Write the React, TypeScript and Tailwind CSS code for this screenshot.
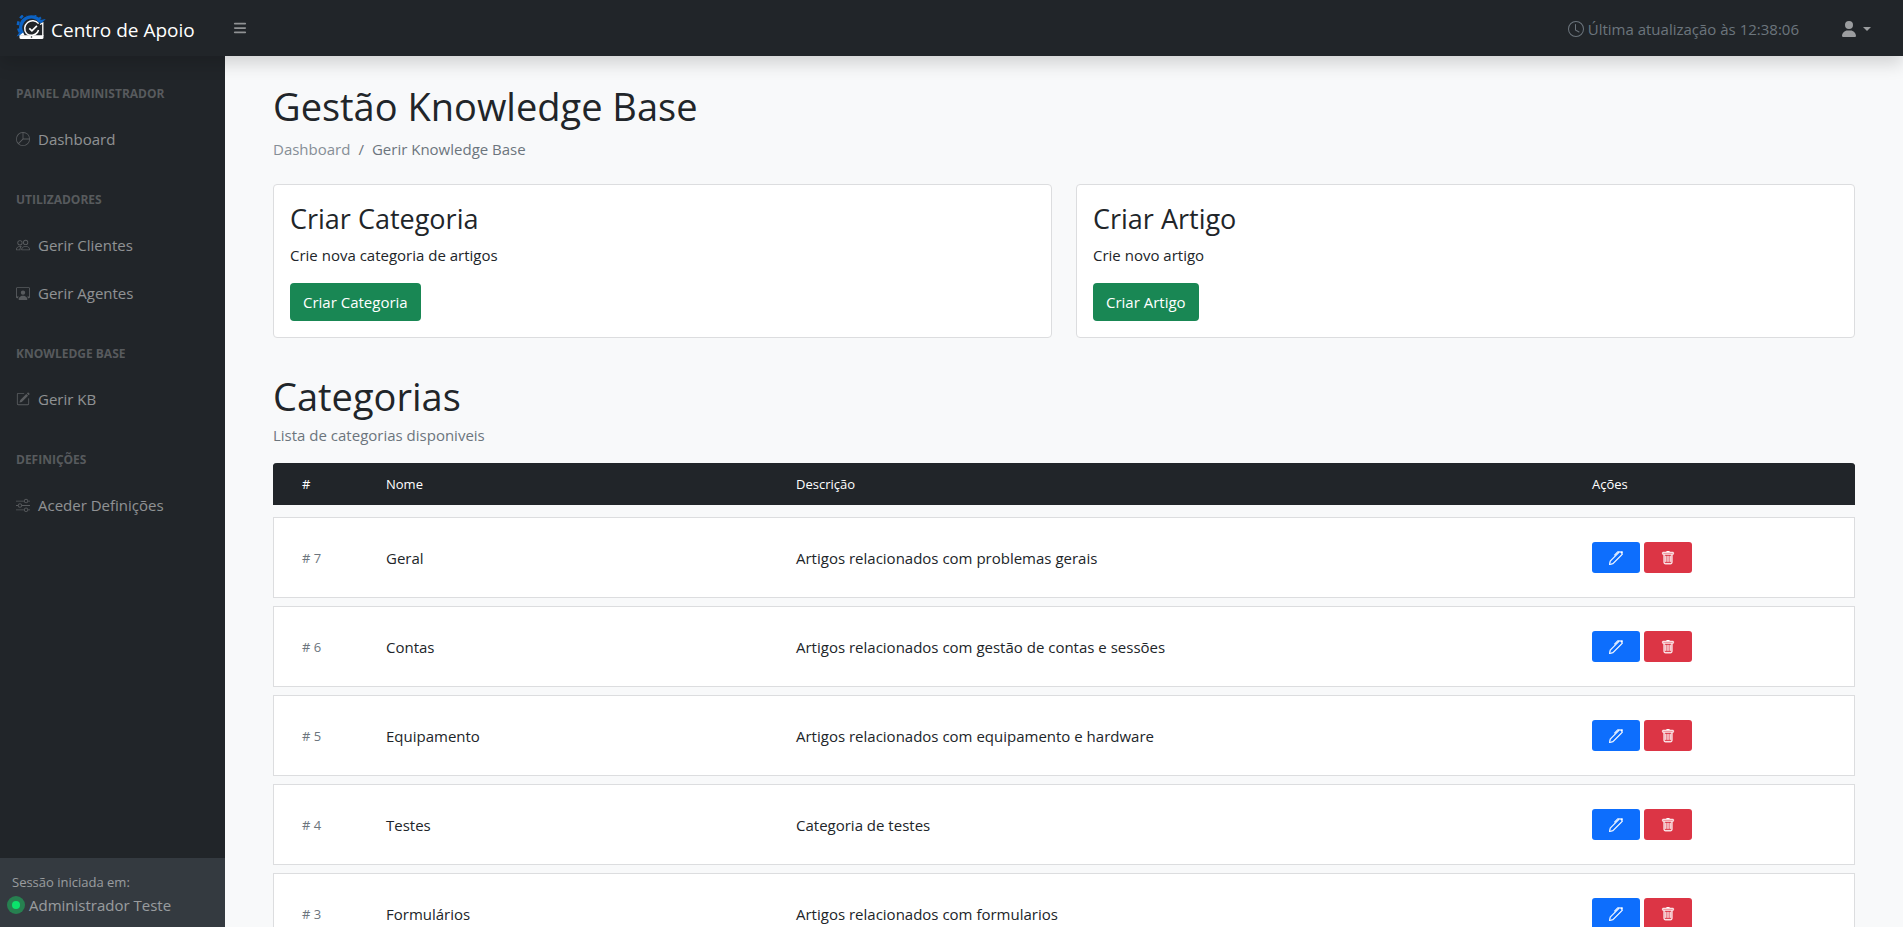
import type { ComponentType } from "react";
import {
  BsClock,
  BsPen,
  BsPencilSquare,
  BsPeople,
  BsPersonWorkspace,
  BsPieChart,
  BsSliders,
  BsTrash,
} from "react-icons/bs";
import { FaBars, FaUser } from "react-icons/fa6";

type NavItem = { label: string; icon: ComponentType<{ className?: string }> };

const sections: { heading: string; items: NavItem[] }[] = [
  { heading: "Painel Administrador", items: [{ label: "Dashboard", icon: BsPieChart }] },
  {
    heading: "Utilizadores",
    items: [
      { label: "Gerir Clientes", icon: BsPeople },
      { label: "Gerir Agentes", icon: BsPersonWorkspace },
    ],
  },
  { heading: "Knowledge Base", items: [{ label: "Gerir KB", icon: BsPencilSquare }] },
  { heading: "Definições", items: [{ label: "Aceder Definições", icon: BsSliders }] },
];

const categories = [
  { id: 7, name: "Geral", description: "Artigos relacionados com problemas gerais" },
  { id: 6, name: "Contas", description: "Artigos relacionados com gestão de contas e sessões" },
  { id: 5, name: "Equipamento", description: "Artigos relacionados com equipamento e hardware" },
  { id: 4, name: "Testes", description: "Categoria de testes" },
  { id: 3, name: "Formulários", description: "Artigos relacionados com formularios" },
];

function Logo() {
  return (
    <svg viewBox="16 15 30 26" className="h-[26px] w-[30px] shrink-0" aria-hidden="true">
      <g fill="none" stroke="#0b62c4">
        <path strokeWidth="3.200" d="M22.400 33.500A10.300 10.300 0 0 1 40.300 21.800" />
        <path strokeWidth="2.600" strokeDasharray="3.800 3.400" d="M19.800 32A12.200 12.200 0 0 1 40.500 19" />
      </g>
      <path fill="#0b62c4" d="M16.500 36.500l4.500-6.500 3 3.500zM37.500 20.500l8.300-1.500-4.600 4.600z" />
      <g fill="none" stroke="#fff">
        <path strokeWidth="1.500" d="M26.500 33.500A7.600 7.600 0 1 1 38.600 23.600M26.500 33.500c3.500 3 10.500 2 12-3.500" />
        <path strokeWidth="1.700" d="m29.300 28.300 2.600 2.500 5-5" />
        <path strokeWidth="1.300" d="M40 24.500l2.800-1.500v13" />
      </g>
      <path fill="#fff" d="M19.500 35.200h24v2.300a1.500 1.500 0 0 1-1.500 1.500H21a1.500 1.500 0 0 1-1.500-1.500z" />
      <path fill="#fff" d="M19.500 35.500l3.600-3 1.600 3z" />
      <circle cx="31.500" cy="37" r=".8" fill="#212529" />
    </svg>
  );
}

function TopBar() {
  return (
    <header className="relative z-10 flex h-14 shrink-0 items-center bg-[#212529] shadow-[0_8px_16px_rgba(0,0,0,0.15)]">
      <a href="#" className="flex w-[225px] items-center gap-[5px] pl-4 text-[19px] text-white">
        <Logo />
        <span className="pt-1">Centro de Apoio</span>
      </a>
      <button type="button" aria-label="Alternar menu" className="px-2 py-1 text-sm text-white/50">
        <FaBars />
      </button>
      <p className="ml-auto flex items-center gap-1 pt-0.5 text-[15px] text-[#6c757d]">
        <BsClock className="size-4" />
        Última atualização às 12:38:06
      </p>
      <button
        type="button"
        aria-label="Conta"
        className="mr-8 ml-[42px] flex items-center gap-1.5 pt-0.5 text-base text-white/55"
      >
        <FaUser />
        <span className="border-x-4 border-t-4 border-x-transparent border-t-current" />
      </button>
    </header>
  );
}

function Sidebar() {
  return (
    <aside className="flex w-[225px] shrink-0 flex-col bg-[#212529]">
      <nav className="flex-1 pt-px">
        {sections.map((section) => (
          <section key={section.heading}>
            <h2 className="px-4 pt-7 pb-3 text-xs leading-[18px] font-bold text-white/25 uppercase">
              {section.heading}
            </h2>
            {section.items.map(({ label, icon: Icon }) => (
              <a
                key={label}
                href="#"
                className="flex h-12 items-center gap-2 px-4 text-[15px] text-white/50"
              >
                <Icon className="size-3.5 text-white/25" />
                {label}
              </a>
            ))}
          </section>
        ))}
      </nav>
      <footer className="h-[69px] bg-[#343a40] px-2 pt-[13px] text-white/50">
        <p className="px-1 text-[13px] leading-[22px]">Sessão iniciada em:</p>
        <p className="flex items-center gap-1 text-[15px] leading-6">
          <span className="-ml-px flex size-[18px] items-center justify-center rounded-full bg-[#278050]">
            <span className="size-2 rounded-full bg-[#0be36b]" />
          </span>
          Administrador Teste
        </p>
      </footer>
    </aside>
  );
}

function ActionCard({ title, text }: { title: string; text: string }) {
  return (
    <article className="rounded border border-[#dcdddf] bg-white p-4">
      <h2 className="mb-1.5 text-[27px] leading-9">{title}</h2>
      <p className="mb-4 text-[15px] leading-6">{text}</p>
      <button
        type="button"
        className="h-[38px] rounded bg-[#198754] px-[13px] text-[15px] text-white"
      >
        {title}
      </button>
    </article>
  );
}

const rowGrid = "grid grid-cols-[84px_410fr_796fr_234fr] items-center px-7 text-left";

function CategoryTable() {
  return (
    <table className="block">
      <thead className="mb-3 block rounded-t bg-[#212529] text-[13px] text-white">
        <tr className={`${rowGrid} h-[42px] rounded-t border-x border-[#212529] pt-0.5`}>
          <th className="font-normal">#</th>
          <th className="font-normal">Nome</th>
          <th className="font-normal">Descrição</th>
          <th className="font-normal">Ações</th>
        </tr>
      </thead>
      <tbody className="flex flex-col gap-2">
        {categories.map((c) => (
          <tr key={c.id} className={`${rowGrid} h-[81px] border border-[#dcdddf] bg-white text-[15px]`}>
            <td className="pt-0.5 text-[13px] text-[#6c757d]"># {c.id}</td>
            <td className="pt-0.5">{c.name}</td>
            <td className="pt-0.5">{c.description}</td>
            <td className="flex gap-1 text-sm text-white">
              <button
                type="button"
                aria-label={`Editar ${c.name}`}
                className="flex h-[31px] w-12 items-center justify-center rounded-[3px] bg-[#0d6efd]"
              >
                <BsPen strokeWidth={0.4} />
              </button>
              <button
                type="button"
                aria-label={`Eliminar ${c.name}`}
                className="flex h-[31px] w-12 items-center justify-center rounded-[3px] bg-[#dc3545]"
              >
                <BsTrash strokeWidth={0.4} />
              </button>
            </td>
          </tr>
        ))}
      </tbody>
    </table>
  );
}

export default function App() {
  return (
    <div className="flex h-screen flex-col overflow-hidden bg-[#f8f9fa] font-['Segoe_UI','Open_Sans',sans-serif] text-[#212529]">
      <TopBar />
      <div className="flex min-h-0 flex-1">
        <Sidebar />
        <main className="min-w-0 flex-1 overflow-hidden px-12 pt-[26px]">
          <h1 className="text-[38px] leading-12">Gestão Knowledge Base</h1>
          <nav aria-label="Navegação" className="mt-[7px] mb-[23px] flex gap-2 text-[15px] leading-6 text-[#6c757d]">
            <a href="#" className="text-[#868e96]">
              Dashboard
            </a>
            <span>/</span>
            <span>Gerir Knowledge Base</span>
          </nav>
          <div className="grid grid-cols-2 gap-6">
            <ActionCard title="Criar Categoria" text="Crie nova categoria de artigos" />
            <ActionCard title="Criar Artigo" text="Crie novo artigo" />
          </div>
          <h2 className="mt-[34px] text-[38px] leading-12">Categorias</h2>
          <p className="mt-[3px] mb-4 text-[15px] leading-6 text-[#6c757d]">Lista de categorias disponiveis</p>
          <CategoryTable />
        </main>
      </div>
    </div>
  );
}
